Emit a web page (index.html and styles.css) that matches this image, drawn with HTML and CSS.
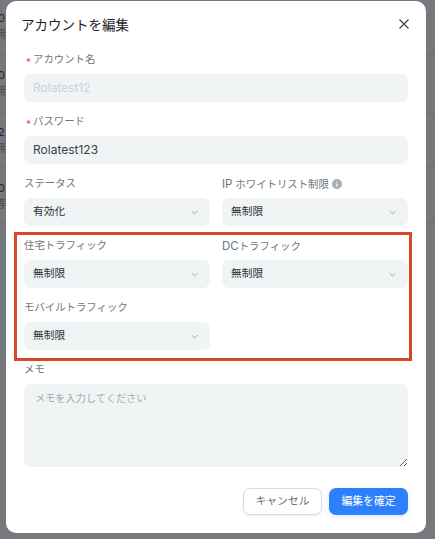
FILE: index.html
```html
<!DOCTYPE html>
<html lang="ja">
<head>
<meta charset="utf-8">
<title>アカウントを編集</title>
<link rel="stylesheet" href="styles.css">
</head>
<body>
<div class="backdrop">
  <div class="bg-row r1"><span>0</span><em>無</em></div>
  <div class="bg-row r2"><span>0</span><em>無</em></div>
  <div class="bg-row r3"><span>2</span><em>無</em></div>
  <div class="bg-row r4"><span>0</span><em>等</em></div>
</div>
<section class="modal">
  <header class="modal-head">
    <h1>アカウントを編集</h1>
    <svg class="close" viewBox="0 0 12 12" width="12" height="12"><path d="M1.5 1.5l9 9M10.5 1.5l-9 9" stroke="#3b3f46" stroke-width="1.2" fill="none"/></svg>
  </header>
  <div class="field">
    <label><i>*</i>アカウント名</label>
    <div class="control disabled"><span class="latin">Rolatest12</span></div>
  </div>
  <div class="field">
    <label><i>*</i>パスワード</label>
    <div class="control"><span class="latin">Rolatest123</span></div>
  </div>
  <div class="grid">
    <div class="field">
      <label>ステータス</label>
      <div class="control select"><span class="value">有効化</span><svg viewBox="0 0 10 6" width="8" height="5"><path d="M1 1l4 4 4-4" stroke="#8f959e" stroke-width="1.2" fill="none"/></svg></div>
    </div>
    <div class="field">
      <label><span class="latin-label">IP</span> ホワイトリスト制限 <svg class="info" viewBox="0 0 10 10" width="10" height="10"><circle cx="5" cy="5" r="5" fill="#a9adb3"/><path d="M5 4.4v3.2M5 2.4v1" stroke="#fff" stroke-width="1.2"/></svg></label>
      <div class="control select"><span class="value">無制限</span><svg viewBox="0 0 10 6" width="8" height="5"><path d="M1 1l4 4 4-4" stroke="#8f959e" stroke-width="1.2" fill="none"/></svg></div>
    </div>
    <div class="field">
      <label>住宅トラフィック</label>
      <div class="control select"><span class="value">無制限</span><svg viewBox="0 0 10 6" width="8" height="5"><path d="M1 1l4 4 4-4" stroke="#8f959e" stroke-width="1.2" fill="none"/></svg></div>
    </div>
    <div class="field">
      <label><span class="latin-label">DC</span>トラフィック</label>
      <div class="control select"><span class="value">無制限</span><svg viewBox="0 0 10 6" width="8" height="5"><path d="M1 1l4 4 4-4" stroke="#8f959e" stroke-width="1.2" fill="none"/></svg></div>
    </div>
    <div class="field">
      <label>モバイルトラフィック</label>
      <div class="control select"><span class="value">無制限</span><svg viewBox="0 0 10 6" width="8" height="5"><path d="M1 1l4 4 4-4" stroke="#8f959e" stroke-width="1.2" fill="none"/></svg></div>
    </div>
  </div>
  <div class="field memo">
    <label>メモ</label>
    <textarea class="control area" placeholder="メモを入力してください"></textarea>
  </div>
  <footer class="actions">
    <button class="btn ghost"><span>キャンセル</span></button>
    <button class="btn primary"><span>編集を確定</span></button>
  </footer>
  <div class="highlight"></div>
</section>
</body>
</html>
```
FILE: styles.css
```css
* { box-sizing: border-box; }
html, body { margin: 0; height: 100%; }
body {
  width: 435px; height: 539px; overflow: hidden; position: relative;
  background: #75787c;
  font-family: Inter, "Noto Sans CJK JP", sans-serif;
  font-size: 12px; color: #2b303a;
}
.backdrop { position: absolute; inset: 0; }
.bg-row { position: absolute; left: 0; width: 435px; border-bottom: 1px solid #6c6f74; color: #24262a; font-size: 11px; line-height: 16px; }
.bg-row span { display: block; margin-left: -2px; }
.bg-row em { display: block; font-style: normal; color: #4a4d52; margin-left: -5px; }
.r1 { top: 0; padding-top: 10px; height: 55px; }
.r2 { top: 55px; padding-top: 12px; height: 58px; }
.r3 { top: 113px; padding-top: 11px; height: 55px; }
.r4 { top: 168px; padding-top: 12px; height: 56px; }
.modal {
  position: absolute; left: 6px; top: 1px; width: 420px; height: 532px;
  background: #fff; border-radius: 10px; padding: 0 18px;
}
.modal-head { display: flex; justify-content: space-between; align-items: center; height: 48px; margin-left: -3px; }
.modal-head h1 { margin: 0; font-size: 13.5px; font-weight: 400; color: #1d2129; line-height: 48px; }
.close { margin: -3px -2px 0 0; }
.field label { display: block; height: 20px; line-height: 22px; font-size: 10.4px; color: #6f7580; white-space: nowrap; }
.field label i { display: inline-block; width: 9px; padding-left: 2px; font-style: normal; color: #f5474a; font-size: 10px; line-height: 10px; vertical-align: -3px; }
.latin-label { font-size: 11.5px; }
.info { vertical-align: -1px; }
.control {
  display: flex; align-items: center; justify-content: space-between;
  width: 100%; height: 28px; margin-top: 5px; padding: 0 12px 0 9px;
  background: #f1f4f5; border: 0; border-radius: 7px; font: inherit; font-size: 10.7px; color: #2b303a;
}
.control svg { width: 7px; height: 5px; }
.value { margin-top: -3px; }
.latin { font-size: 12px; color: #3a3f4a; margin-top: -2px; }
.disabled .latin { color: #cdd1d6; }
.modal > .field + .field { margin-top: 9px; }
.grid { display: grid; grid-template-columns: 186px 186px; column-gap: 12px; row-gap: 9px; margin-top: 9px; }
.modal > .memo { margin-top: 9px; }
.area { display: block; height: 83px; padding: 6px 11px; resize: vertical; outline: 0; font-size: 10.2px; }
.area::placeholder { color: #a4a9b1; }
.actions { display: flex; justify-content: flex-end; gap: 7px; margin-top: 21px; }
.btn { height: 27px; border-radius: 7px; font: inherit; font-size: 10.8px; padding: 0 0 3px; }
.ghost { width: 79px; background: #fff; border: 1px solid #d9dbde; color: #6b7079; box-shadow: 0 1px 2px rgba(0,0,0,.08); }
.primary { width: 79px; background: #2e7ffb; border: 0; color: #fff; box-shadow: 0 2px 6px rgba(46,127,251,.15); }
.highlight { position: absolute; left: 8px; top: 231px; width: 398px; height: 129px; border: 3px solid #d9472b; pointer-events: none; }
```
